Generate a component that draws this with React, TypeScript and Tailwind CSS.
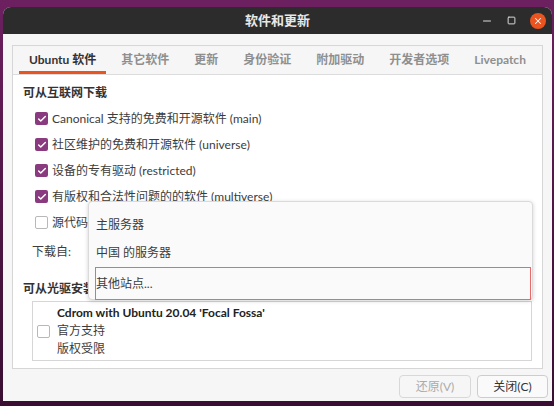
import { Check, Minus, Square, X } from 'lucide-react';

const FONT = { fontFamily: 'Lato, "Noto Sans CJK SC", sans-serif' };

const TABS = ['Ubuntu 软件', '其它软件', '更新', '身份验证', '附加驱动', '开发者选项', 'Livepatch'];

const SOURCES = [
  { label: 'Canonical 支持的免费和开源软件 (main)', on: true },
  { label: '社区维护的免费和开源软件 (universe)', on: true },
  { label: '设备的专有驱动 (restricted)', on: true },
  { label: '有版权和合法性问题的的软件 (multiverse)', on: true },
  { label: '源代码', on: false },
];

function Box({ on }: { on: boolean }) {
  if (on) {
    return (
      <span className="flex h-[13px] w-[13px] shrink-0 items-center justify-center rounded-[2px] bg-[#8a3a7e]">
        <Check size={10} strokeWidth={3.5} className="text-white" />
      </span>
    );
  }
  return <span className="h-[13px] w-[13px] shrink-0 rounded-[2px] border border-[#b8b8b8] bg-white" />;
}

export default function App() {
  return (
    <div
      className="h-[406px] w-[554px] overflow-hidden bg-[linear-gradient(180deg,#6d2060_0%,#4a1440_60%,#3a0e33_100%)] pb-[5px] pl-[3px] pr-[2px] pt-[7px] text-[12px] text-[#3c3c3c]"
      style={FONT}
    >
      <div className="flex h-full flex-col overflow-hidden rounded-t-[8px] bg-[#f6f6f6]">
        {/* Title bar */}
        <div className="relative flex h-[27px] shrink-0 items-center justify-center bg-[#2c2c2c]">
          <span className="text-[13px] font-bold text-[#e8e8e8]">软件和更新</span>
          <div className="absolute right-[6px] top-0 flex h-full items-center gap-[11px]">
            <Minus size={12} strokeWidth={2} className="text-[#dcdcdc]" />
            <Square size={9} strokeWidth={2.6} className="mx-[3px] text-[#dcdcdc]" />
            <span className="flex h-[16px] w-[16px] items-center justify-center rounded-full bg-[#e95420]">
              <X size={10} strokeWidth={2.5} className="text-white" />
            </span>
          </div>
        </div>

        {/* Body */}
        <div className="flex flex-1 flex-col pl-[9px] pr-[9px] pt-[11px]">
          <div className="relative flex h-[324px] flex-col border border-[#d6d6d6] bg-white">
            {/* Tabs */}
            <div className="flex h-[29px] shrink-0 items-stretch gap-[5px] border-b border-[#dcdcdc] bg-[#f6f6f6] pl-[6px]">
              {TABS.map((t, i) => (
                <div
                  key={t}
                  className={
                    i === 0
                      ? 'flex items-center border-b-[3px] border-[#e95420] px-[10px] pt-[3px] font-bold text-[#333]'
                      : 'flex items-center px-[10px] font-bold text-[#8f8f8f]'
                  }
                >
                  {t}
                </div>
              ))}
            </div>

            {/* Page */}
            <div className="flex flex-col px-[10px] pt-[10px]">
              <div className="font-bold leading-[16px] text-[#333]">可从互联网下载</div>
              <div className="mt-[9px] flex flex-col gap-[9px] pl-[12px]">
                {SOURCES.map((s) => (
                  <label key={s.label} className="flex h-[17px] items-center gap-[4px]">
                    <Box on={s.on} />
                    <span>{s.label}</span>
                  </label>
                ))}
              </div>
              <div className="mt-[12px] flex h-[17px] items-center pl-[9px]">下载自:</div>
              <div className="mt-[21px] font-bold leading-[16px] text-[#333]">可从光驱安装</div>
              <div className="ml-[9px] mt-[4px] flex h-[60px] items-center gap-[7px] border border-[#d6d6d6] bg-white pl-[4px]">
                <Box on={false} />
                <div className="flex flex-col leading-[18px]">
                  <span className="font-bold text-[#222]">Cdrom with Ubuntu 20.04 'Focal Fossa'</span>
                  <span>官方支持</span>
                  <span>版权受限</span>
                </div>
              </div>
            </div>

            {/* Mirror dropdown menu */}
            <div className="absolute left-[75px] top-[155px] flex w-[445px] flex-col rounded-[4px] border border-[#dadada] bg-[#fafafa] pt-[9px] shadow-[0_1px_4px_rgba(0,0,0,0.18)]">
              <div className="flex h-[28px] items-center pl-[7px]">主服务器</div>
              <div className="flex h-[28px] items-center pl-[7px]">中国 的服务器</div>
              <div className="mb-[-1px] ml-[6px] mr-[1px] flex h-[33px] items-center border border-[#e86a6a]">其他站点...</div>
            </div>
          </div>

          {/* Buttons */}
          <div className="mt-[6px] flex justify-end gap-[6px]">
            <button className="h-[23px] w-[72px] rounded-[4px] border border-[#d8d8d8] bg-[#f6f6f6] text-[#aaaaaa]">
              还原(V)
            </button>
            <button className="-mr-[5px] h-[23px] w-[71px] rounded-[4px] border border-[#cdcdcd] bg-[#fafafa] text-[#333]">
              关闭(C)
            </button>
          </div>
        </div>
      </div>
    </div>
  );
}
